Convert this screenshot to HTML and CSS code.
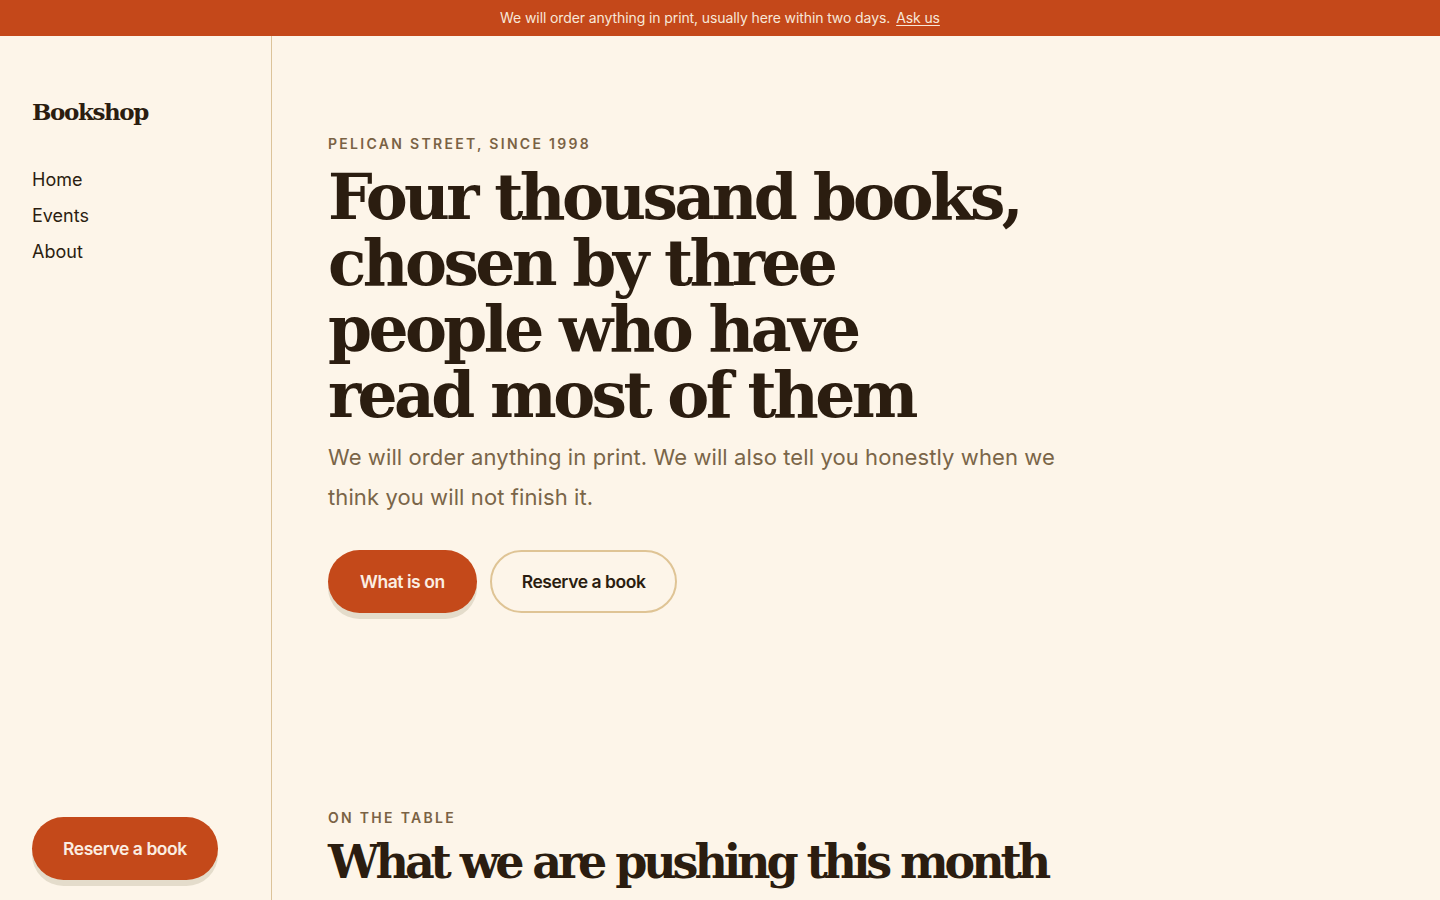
FILE: index.html
```html
<!DOCTYPE html>
<html lang="en">
<head>
<meta charset="utf-8">
<title>Bookshop</title>
<link rel="stylesheet" href="styles.css">
</head>
<body>
<div class="banner">We will order anything in print, usually here within two days. <a href="#" class="banner-link">Ask us</a></div>
<div class="layout">
  <aside class="sidebar">
    <div class="logo">Bookshop</div>
    <nav class="nav">
      <a href="#" class="nav-link">Home</a>
      <a href="#" class="nav-link">Events</a>
      <a href="#" class="nav-link">About</a>
    </nav>
    <a href="#" class="btn btn-primary btn-side">Reserve a book</a>
  </aside>
  <main class="main">
    <section class="hero">
      <div class="eyebrow">Pelican Street, since 1998</div>
      <h1 class="hero-title">Four thousand books,<br>chosen by three<br>people who have<br>read most of them</h1>
      <p class="lede">We will order anything in print. We will also tell you honestly when we think you will not finish it.</p>
      <div class="actions">
        <a href="#" class="btn btn-primary btn-hero">What is on</a>
        <a href="#" class="btn btn-outline">Reserve a book</a>
      </div>
    </section>
    <section class="table">
      <div class="eyebrow">On the table</div>
      <h2 class="section-title">What we are pushing this month</h2>
    </section>
  </main>
</div>
</body>
</html>
```
FILE: styles.css
```css
* { box-sizing: border-box; }
html, body { margin: 0; padding: 0; }
body {
  background: #fdf5e9;
  color: #2b1d10;
  font-family: Inter, "Noto Sans", sans-serif;
  height: 900px;
  overflow: hidden;
}
a { color: inherit; text-decoration: none; }

.banner {
  height: 36px;
  background: #c4481a;
  color: #f7e7d8;
  font-size: 14px;
  display: flex;
  align-items: center;
  justify-content: center;
  gap: 6px;
  letter-spacing: -0.1px;
  padding-bottom: 1px;
}
.banner-link { text-decoration: underline; text-underline-offset: 2px; }

.layout {
  display: grid;
  grid-template-columns: 272px 1fr;
  height: 864px;
}
.sidebar {
  border-right: 1px solid #dcc39a;
  display: flex;
  flex-direction: column;
  padding: 60px 32px 20px;
}
.logo {
  font-family: "DejaVu Serif", serif;
  font-weight: 700;
  font-size: 23px;
  letter-spacing: -1.4px;
  line-height: 32px;
}
.nav {
  display: flex;
  flex-direction: column;
  margin-top: 34px;
}
.nav-link {
  font-size: 18px;
  line-height: 36px;
  color: #2b1d10;
}
.btn {
  display: inline-flex;
  align-items: center;
  justify-content: center;
  height: 63px;
  padding: 0 30px;
  border-radius: 999px;
  font-size: 17.5px;
  font-weight: 600;
  letter-spacing: -0.45px;
}
.btn-primary {
  background: #c4491a;
  color: #fbeee2;
  box-shadow: 0 6px 0 #e4dccb;
}
.btn-hero { padding: 0 32px; }
.btn-outline {
  border: 2px solid #dfc495;
  color: #2b1d10;
}
.btn-side {
  margin-top: auto;
  align-self: flex-start;
  padding: 0 31px;
}

.main {
  padding: 98px 56px 0;
}
.eyebrow {
  font-size: 14px;
  font-weight: 600;
  letter-spacing: 2.3px;
  text-transform: uppercase;
  color: #7a6244;
  line-height: 20px;
}
.hero-title {
  font-family: "DejaVu Serif", serif;
  font-weight: 700;
  font-size: 63px;
  line-height: 66px;
  letter-spacing: -3.6px;
  margin: 10px 0 0;
}
.lede {
  font-size: 22px;
  line-height: 40px;
  letter-spacing: 0.1px;
  color: #7a6548;
  max-width: 740px;
  margin: 9px 0 0;
}
.actions {
  display: flex;
  gap: 13px;
  margin-top: 33px;
}
.table {
  margin-top: 195px;
}
.section-title {
  font-family: "DejaVu Serif", serif;
  font-weight: 700;
  font-size: 46px;
  letter-spacing: -4.1px;
  line-height: 56px;
  margin: 6px 0 0;
}
```
